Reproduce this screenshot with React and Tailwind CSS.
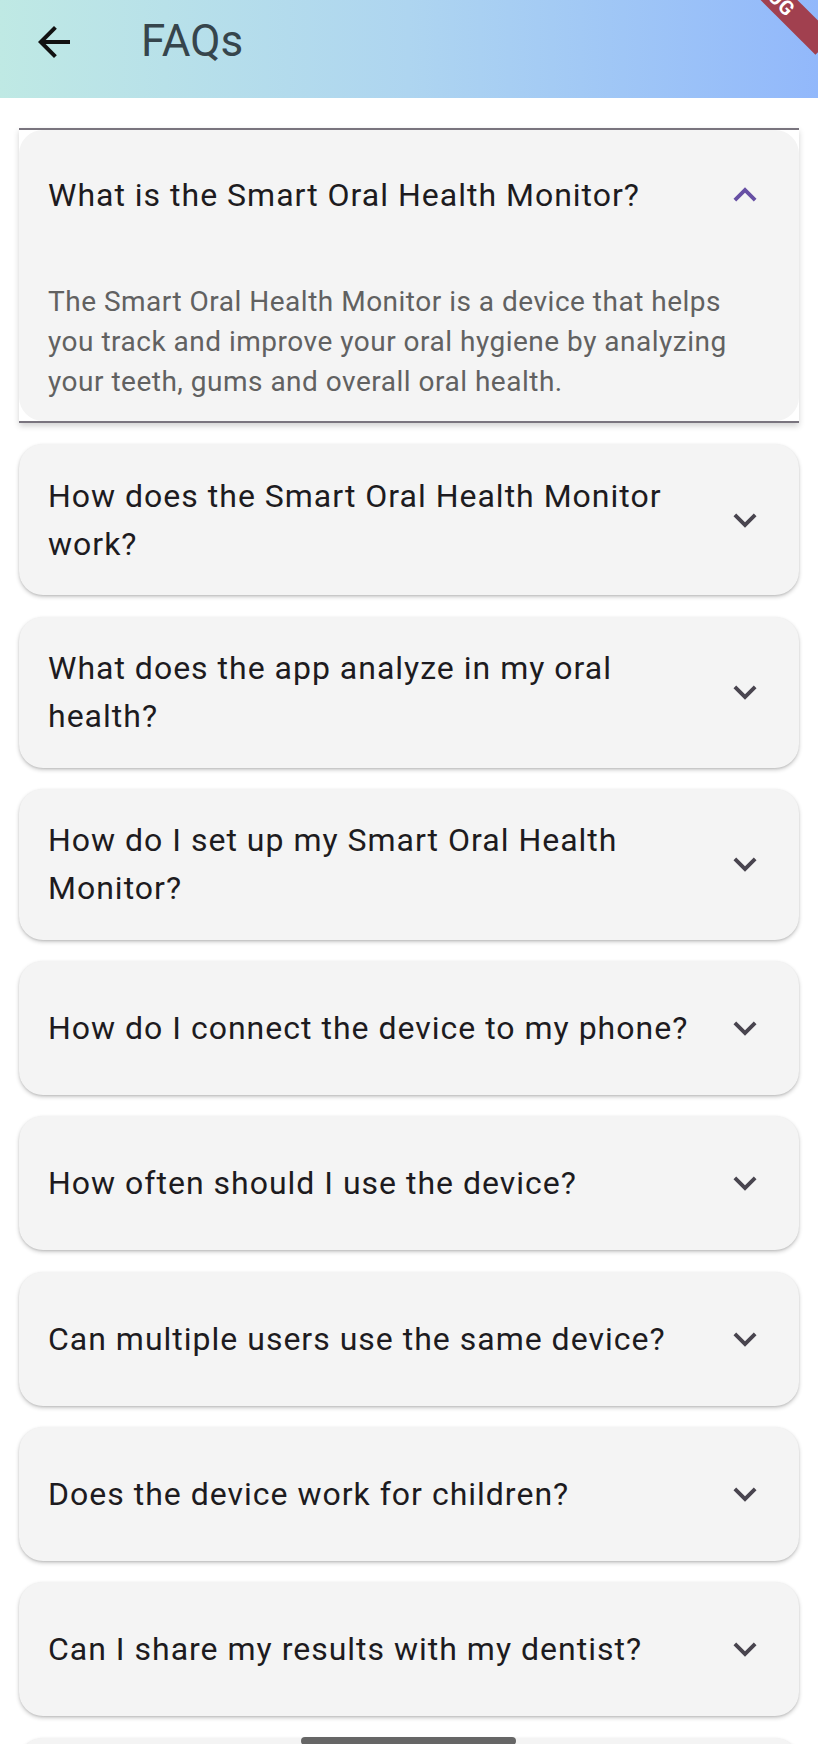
import { useState } from 'react';

const faqs = [
    {
        q: 'What is the Smart Oral Health Monitor?',
        a: 'The Smart Oral Health Monitor is a device that helps you track and improve your oral hygiene by analyzing your teeth, gums and overall oral health.',
    },
    { q: 'How does the Smart Oral Health Monitor work?', a: '' },
    { q: 'What does the app analyze in my oral health?', a: '' },
    { q: 'How do I set up my Smart Oral Health Monitor?', a: '' },
    { q: 'How do I connect the device to my phone?', a: '' },
    { q: 'How often should I use the device?', a: '' },
    { q: 'Can multiple users use the same device?', a: '' },
    { q: 'Does the device work for children?', a: '' },
    { q: 'Can I share my results with my dentist?', a: '' },
    { q: 'Is my data kept private?', a: '' },
];

const Chevron = ({ up }) => (
    <svg viewBox="0 0 24 24" className="w-[46px] h-[46px] shrink-0" fill={up ? '#6750a4' : '#49454f'}>
        {up ? (
            <path d="M12 8l-6 6 1.41 1.41L12 10.83l4.59 4.58L18 14z" />
        ) : (
            <path d="M16.59 8.59L12 13.17 7.41 8.59 6 10l6 6 6-6z" />
        )}
    </svg>
);

const FaqItem = ({ item, open, onToggle }) => {
    if (open) {
        return (
            <div className="border-y-2 border-[#79747e] shadow-[0_3px_6px_rgba(0,0,0,0.18)]">
                <div className="rounded-[24px] bg-[#f4f4f4]">
                    <button
                        onClick={onToggle}
                        className="w-full min-h-[129px] flex items-center gap-[24px] pl-[29px] pr-[31px] py-[27px] text-left"
                    >
                        <span className="flex-1 text-[32px] leading-[48px] tracking-[1px] text-[#1d1b20]">{item.q}</span>
                        <Chevron up />
                    </button>
                    <p className="pl-[29px] pr-[32px] pt-[23px] pb-[19px] text-[28px] leading-[40px] tracking-[0.5px] text-[#616161]">
                        {item.a}
                    </p>
                </div>
            </div>
        );
    }

    return (
        <div className="rounded-[24px] bg-[#f4f4f4] shadow-[0_2px_4px_rgba(0,0,0,0.2),0_1px_2px_rgba(0,0,0,0.1)]">
            <button
                onClick={onToggle}
                className="w-full min-h-[134px] flex items-center gap-[24px] pl-[29px] pr-[31px] py-[27.5px] text-left"
            >
                <span className="flex-1 text-[32px] leading-[48px] tracking-[1px] text-[#1d1b20]">{item.q}</span>
                <Chevron />
            </button>
        </div>
    );
};

export default function App() {
    const [openIdx, setOpenIdx] = useState(0);

    return (
        <div className="relative w-[818px] h-[1764px] overflow-hidden bg-white font-['Roboto',sans-serif]">
            {/* App bar */}
            <header className="relative h-[98px] flex items-start overflow-hidden bg-gradient-to-r from-[#bfe9e4] via-[#aed5f0] to-[#92b8fb]">
                <button className="mt-[18px] ml-[30px] w-[48px] h-[48px]">
                    <svg viewBox="0 0 24 24" className="w-[48px] h-[48px]" fill="#111">
                        <path d="M20 11H7.83l5.59-5.59L12 4l-8 8 8 8 1.41-1.41L7.83 13H20v-2z" />
                    </svg>
                </button>
                <h1 className="ml-[63px] mt-[13px] text-[44px] leading-[56px] text-[#36454c]">FAQs</h1>

                {/* debug banner */}
                <div className="absolute left-[688px] top-[-24px] w-[160px] h-[26px] rotate-45 bg-[#a1404f] flex items-center justify-center text-[20px] leading-none font-bold text-white tracking-[0.5px]">
                    DEBUG
                </div>
            </header>

            {/* List */}
            <div className="h-[1646px] overflow-hidden">
                <div className="flex flex-col gap-[21.3px] px-[19px] pt-[30px]">
                    {faqs.map((item, i) => (
                        <FaqItem
                            key={i}
                            item={item}
                            open={openIdx === i}
                            onToggle={() => setOpenIdx(openIdx === i ? -1 : i)}
                        />
                    ))}
                </div>
            </div>

            {/* gesture bar */}
            <div className="absolute left-[301px] top-[1737px] w-[215px] h-[8px] rounded-full bg-[#666666]"></div>
            <div className="absolute left-0 right-0 top-[1744px] h-[20px] rounded-t-[20px] bg-white"></div>
        </div>
    );
}
